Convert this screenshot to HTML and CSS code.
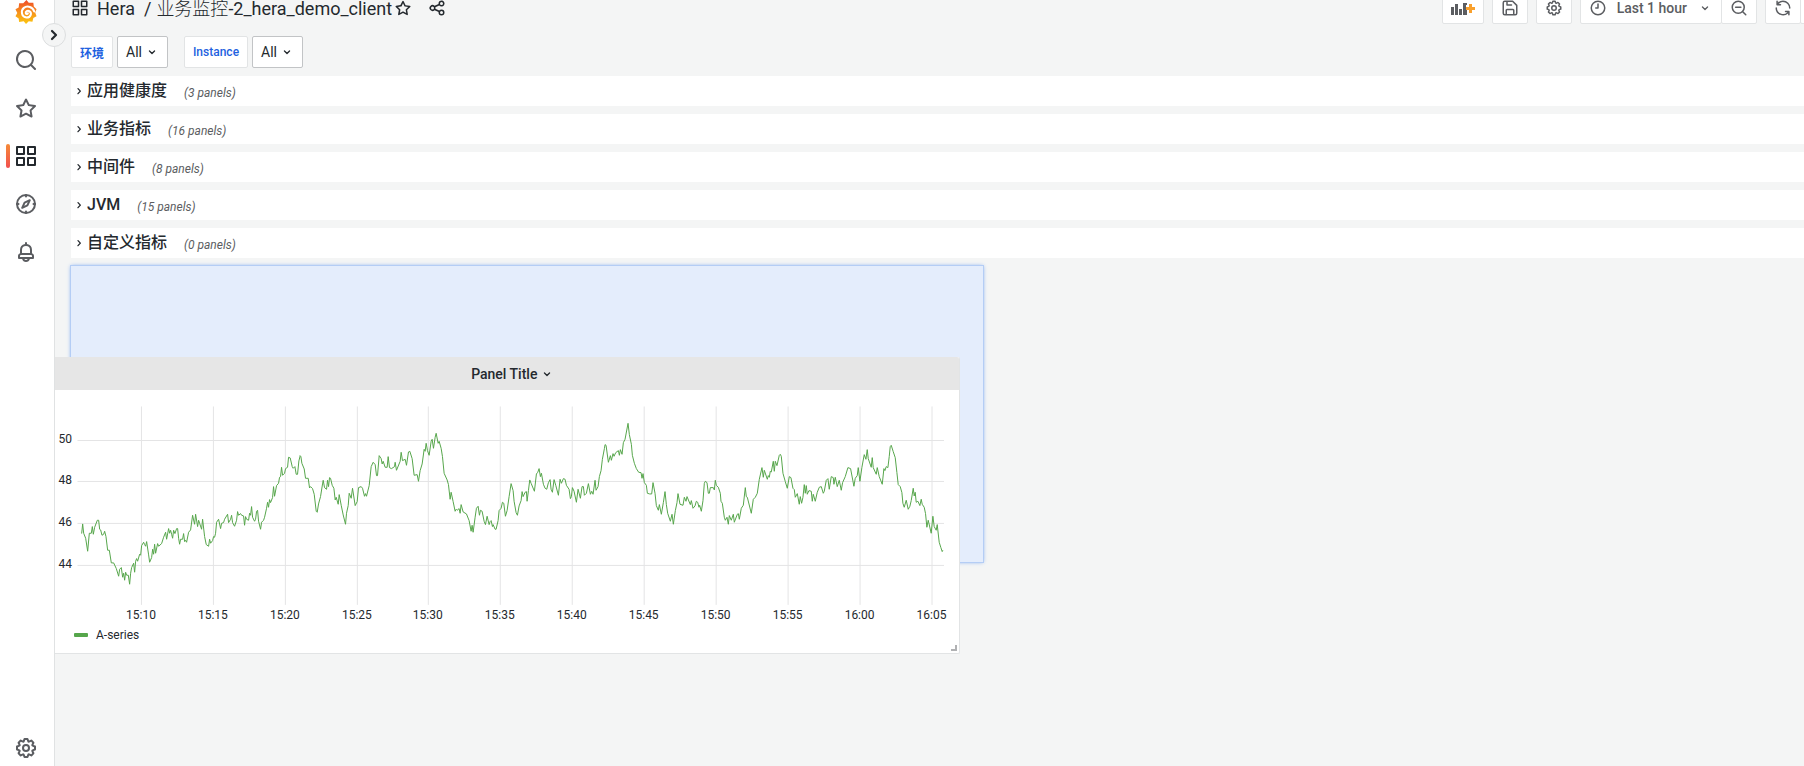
FILE: index.html
```html
<!DOCTYPE html>
<html lang="zh-CN">
<head>
<meta charset="utf-8">
<title>Hera / 业务监控-2_hera_demo_client</title>
<link rel="stylesheet" href="styles.css">
</head>
<body>
<svg class="sprite" aria-hidden="true">
  <symbol id="i-search" viewBox="0 0 24 24"><path d="M21.71,20.29,18,16.61A9,9,0,1,0,16.61,18l3.68,3.68a1,1,0,0,0,1.42,0A1,1,0,0,0,21.71,20.29ZM11,18a7,7,0,1,1,7-7A7,7,0,0,1,11,18Z"/></symbol>
  <symbol id="i-star" viewBox="0 0 24 24"><path d="M22,9.67A1,1,0,0,0,21.14,9l-5.69-.83L12.9,3a1,1,0,0,0-1.8,0L8.55,8.16,2.86,9a1,1,0,0,0-.81.68,1,1,0,0,0,.25,1l4.13,4-1,5.68A1,1,0,0,0,6.9,21.44L12,18.77l5.1,2.67a.93.93,0,0,0,.46.12,1,1,0,0,0,.59-.19,1,1,0,0,0,.4-1l-1-5.68,4.13-4A1,1,0,0,0,22,9.67Zm-6.15,4a1,1,0,0,0-.29.88l.72,4.2-3.76-2a1.06,1.06,0,0,0-.94,0l-3.76,2,.72-4.2a1,1,0,0,0-.29-.88l-3-3,4.21-.61a1,1,0,0,0,.76-.55L12,5.7l1.88,3.82a1,1,0,0,0,.76.55l4.21.61Z"/></symbol>
  <symbol id="i-apps" viewBox="0 0 24 24"><path d="M10,13H3a1,1,0,0,0-1,1v7a1,1,0,0,0,1,1h7a1,1,0,0,0,1-1V14A1,1,0,0,0,10,13ZM9,20H4V15H9ZM21,2H14a1,1,0,0,0-1,1v7a1,1,0,0,0,1,1h7a1,1,0,0,0,1-1V3A1,1,0,0,0,21,2ZM20,9H15V4h5Zm1,4H14a1,1,0,0,0-1,1v7a1,1,0,0,0,1,1h7a1,1,0,0,0,1-1V14A1,1,0,0,0,21,13Zm-1,7H15V15h5ZM10,2H3A1,1,0,0,0,2,3v7a1,1,0,0,0,1,1h7a1,1,0,0,0,1-1V3A1,1,0,0,0,10,2ZM9,9H4V4H9Z"/></symbol>
  <symbol id="i-cog" viewBox="0 0 24 24"><path d="M21.32,9.55l-1.89-.63.89-1.78A1,1,0,0,0,20.13,6L18,3.87a1,1,0,0,0-1.15-.19l-1.78.89-.63-1.89A1,1,0,0,0,13.5,2h-3a1,1,0,0,0-.95.68L8.92,4.57,7.14,3.68A1,1,0,0,0,6,3.87L3.87,6a1,1,0,0,0-.19,1.15l.89,1.78-1.89.63A1,1,0,0,0,2,10.5v3a1,1,0,0,0,.68.95l1.89.63-.89,1.78A1,1,0,0,0,3.87,18L6,20.13a1,1,0,0,0,1.15.19l1.78-.89.63,1.89a1,1,0,0,0,.95.68h3a1,1,0,0,0,.95-.68l.63-1.89,1.78.89A1,1,0,0,0,18,20.13L20.13,18a1,1,0,0,0,.19-1.15l-.89-1.78,1.89-.63A1,1,0,0,0,22,13.5v-3A1,1,0,0,0,21.32,9.55ZM20,12.78l-1.2.4A2,2,0,0,0,17.64,16l.57,1.14-1.1,1.1L16,17.64a2,2,0,0,0-2.79,1.16l-.4,1.2H11.22l-.4-1.2A2,2,0,0,0,8,17.64l-1.14.57-1.1-1.1L6.36,16A2,2,0,0,0,5.2,13.18L4,12.78V11.22l1.2-.4A2,2,0,0,0,6.36,8L5.79,6.89l1.1-1.1L8,6.36A2,2,0,0,0,10.82,5.2l.4-1.2h1.56l.4,1.2A2,2,0,0,0,16,6.36l1.14-.57,1.1,1.1L17.64,8a2,2,0,0,0,1.16,2.79l1.2.4ZM12,8a4,4,0,1,0,4,4A4,4,0,0,0,12,8Zm0,6a2,2,0,1,1,2-2A2,2,0,0,1,12,14Z"/></symbol>
  <symbol id="i-bell" viewBox="0 0 24 24"><path d="M18,13.18V10a6,6,0,0,0-5-5.91V3a1,1,0,0,0-2,0V4.09A6,6,0,0,0,6,10v3.18A3,3,0,0,0,4,16v2a1,1,0,0,0,1,1H8.14a4,4,0,0,0,7.72,0H19a1,1,0,0,0,1-1V16A3,3,0,0,0,18,13.18ZM8,10a4,4,0,0,1,8,0v3H8Zm4,10a2,2,0,0,1-1.72-1h3.44A2,2,0,0,1,12,20Zm6-3H6V16a1,1,0,0,1,1-1H17a1,1,0,0,1,1,1Z"/></symbol>
  <symbol id="i-compass" viewBox="0 0 24 24"><g fill="none" stroke="currentColor" stroke-width="2" stroke-linejoin="round" stroke-linecap="round"><circle cx="12" cy="12" r="9"/><path d="M15.800 8.200 13.400 13.400 8.200 15.800 10.600 10.600ZM12 3V4.500M12 19.500v1.500M3 12h1.500M19.500 12h1.500"/></g></symbol>
  <symbol id="i-share" viewBox="0 0 24 24"><path d="M18,14a4,4,0,0,0-3.08,1.48l-5.1-2.35a3.64,3.64,0,0,0,0-2.26l5.1-2.35A4,4,0,1,0,14,6a4.17,4.17,0,0,0,.07.71L8.79,9.14a4,4,0,1,0,0,5.72l5.28,2.43A4.17,4.17,0,0,0,14,18a4,4,0,1,0,4-4ZM18,4a2,2,0,1,1-2,2A2,2,0,0,1,18,4ZM6,14a2,2,0,1,1,2-2A2,2,0,0,1,6,14Zm12,6a2,2,0,1,1,2-2A2,2,0,0,1,18,20Z"/></symbol>
  <symbol id="i-save" viewBox="0 0 24 24"><g fill="none" stroke="currentColor" stroke-width="2" stroke-linejoin="round" stroke-linecap="round"><path d="M3 5a2 2 0 0 1 2-2h10.5L21 8.500V19a2 2 0 0 1-2 2H5a2 2 0 0 1-2-2ZM8 3v5h6M7 21v-6a1 1 0 0 1 1-1h8a1 1 0 0 1 1 1v6"/></g></symbol>
  <symbol id="i-clock" viewBox="0 0 24 24"><g fill="none" stroke="currentColor" stroke-width="2" stroke-linecap="round" stroke-linejoin="round"><circle cx="12" cy="12" r="9"/><path d="M12 6.500V12H9"/></g></symbol>
  <symbol id="i-zoomout" viewBox="0 0 24 24"><g fill="none" stroke="currentColor" stroke-width="2" stroke-linecap="round"><circle cx="11" cy="11" r="8"/><path d="M17 17 21 21M7.500 11h7"/></g></symbol>
  <symbol id="i-sync" viewBox="0 0 24 24"><path d="M19.91,15.51H15.38a1,1,0,0,0,0,2h2.4A8,8,0,0,1,4,12a1,1,0,0,0-2,0,10,10,0,0,0,16.88,7.23V21a1,1,0,0,0,2,0V16.5A1,1,0,0,0,19.91,15.51ZM12,2A10,10,0,0,0,5.12,4.77V3a1,1,0,0,0-2,0V7.5a1,1,0,0,0,1,1h4.5a1,1,0,0,0,0-2H6.22A8,8,0,0,1,20,12a1,1,0,0,0,2,0A10,10,0,0,0,12,2Z"/></symbol>
  <symbol id="i-down" viewBox="0 0 24 24"><path d="M8.200 10.500 12 14.200 15.800 10.500" fill="none" stroke="currentColor" stroke-width="2" stroke-linecap="round" stroke-linejoin="round"/></symbol>
  <symbol id="i-right" viewBox="0 0 24 24"><path d="M10.500 8.500 14 12.200 10.500 16" fill="none" stroke="currentColor" stroke-width="2" stroke-linecap="round" stroke-linejoin="round"/></symbol>
  <symbol id="i-expand" viewBox="0 0 24 24"><path d="M10 8 14 12 10 16" fill="none" stroke="currentColor" stroke-width="2.200" stroke-linecap="round" stroke-linejoin="round"/></symbol>
</svg>

<div class="app">
  <nav class="sidebar" aria-label="Main menu">
    <a class="side-link" href="#" aria-label="Grafana">
      <svg class="logo" viewBox="0 0 24 26" aria-hidden="true">
        <defs><linearGradient id="flame" x1="0" y1="1" x2="0" y2="0"><stop offset="0" stop-color="#fcc70f"/><stop offset=".55" stop-color="#f58a1f"/><stop offset="1" stop-color="#ef4a28"/></linearGradient></defs>
        <path fill="url(#flame)" d="M12.500 0 15 3 20 3 20.500 7 23.500 10 22 13.500 23.500 17.500 20 19.500 19 23.500 15 23 12 26 9.500 23 4.500 24 4 20 .5 17.500 2.500 14 .5 10 4 8 4.500 3.500 9 3.500Z"/>
        <path fill="none" stroke="#fff" stroke-width="2.200" stroke-linecap="round" d="M21 12.500C19.500 7.500 13.500 5.500 9.700 8.500 6 11.500 7 18.500 12.500 19 17 19.200 18.800 14.500 16 12.300 13.800 10.600 11 12.300 11.800 14.500 12.300 15.600 13.600 15.400 14 14.400"/>
      </svg>
    </a>
    <a class="side-link" href="#" aria-label="Search"><svg class="icon icon-lg"><use href="#i-search"/></svg></a>
    <a class="side-link" href="#" aria-label="Starred"><svg class="icon icon-lg"><use href="#i-star"/></svg></a>
    <a class="side-link active" href="#" aria-label="Dashboards"><svg class="icon icon-lg"><use href="#i-apps"/></svg></a>
    <a class="side-link" href="#" aria-label="Explore"><svg class="icon icon-lg"><use href="#i-compass"/></svg></a>
    <a class="side-link" href="#" aria-label="Alerting"><svg class="icon icon-lg"><use href="#i-bell"/></svg></a>
    <a class="side-link bottom" href="#" aria-label="Configuration"><svg class="icon icon-lg"><use href="#i-cog"/></svg></a>
    <button class="expand" type="button" aria-label="Expand menu"><svg class="icon icon-lg"><use href="#i-expand"/></svg></button>
  </nav>

  <main class="main">
    <header class="toolbar">
      <svg class="icon icon-md"><use href="#i-apps"/></svg>
      <h1 class="crumbs"><a href="#">Hera</a><span class="slash">/</span><a href="#"><span class="light">业务监控</span>-2_hera_demo_client</a></h1>
      <button class="plain" type="button" aria-label="Mark as favorite"><svg class="icon icon-md"><use href="#i-star"/></svg></button>
      <button class="plain" type="button" aria-label="Share"><svg class="icon icon-md"><use href="#i-share"/></svg></button>
      <div class="actions">
        <button class="tool" type="button" aria-label="Add panel">
          <svg class="add-icon" viewBox="0 0 24 16" aria-hidden="true"><path fill="#5b5d61" d="M0 7h3v8H0zM4 4h3v11H4zM8 9h3v6H8zM12 3h4v2h-1v4h1v6h-4z"/><path fill="#f9a02c" d="M18 4h3v3h3v3h-3v3h-3v-3h-3V7h3z"/></svg>
        </button>
        <button class="tool" type="button" aria-label="Save dashboard"><svg class="icon icon-md"><use href="#i-save"/></svg></button>
        <button class="tool" type="button" aria-label="Dashboard settings"><svg class="icon icon-md"><use href="#i-cog"/></svg></button>
        <div class="joined">
          <button class="tool time" type="button"><svg class="icon icon-md"><use href="#i-clock"/></svg><span>Last 1 hour</span><svg class="icon"><use href="#i-down"/></svg></button>
          <button class="tool" type="button" aria-label="Zoom out"><svg class="icon icon-md"><use href="#i-zoomout"/></svg></button>
        </div>
        <div class="joined">
          <button class="tool" type="button" aria-label="Refresh"><svg class="icon icon-md"><use href="#i-sync"/></svg></button>
          <button class="tool" type="button" aria-label="Refresh interval"><svg class="icon"><use href="#i-down"/></svg></button>
        </div>
      </div>
    </header>

    <div class="variables">
      <div class="variable">
        <label class="var-label strong" for="var-env">环境</label>
        <button class="var-value" id="var-env" type="button">All<svg class="icon"><use href="#i-down"/></svg></button>
      </div>
      <div class="variable">
        <label class="var-label" for="var-instance">Instance</label>
        <button class="var-value" id="var-instance" type="button">All<svg class="icon"><use href="#i-down"/></svg></button>
      </div>
    </div>

    <div class="rows">
      <button class="row" type="button"><svg class="icon"><use href="#i-right"/></svg><span class="row-title">应用健康度</span><span class="count">(3 panels)</span></button>
      <button class="row" type="button"><svg class="icon"><use href="#i-right"/></svg><span class="row-title">业务指标</span><span class="count">(16 panels)</span></button>
      <button class="row" type="button"><svg class="icon"><use href="#i-right"/></svg><span class="row-title">中间件</span><span class="count">(8 panels)</span></button>
      <button class="row" type="button"><svg class="icon"><use href="#i-right"/></svg><span class="row-title">JVM</span><span class="count">(15 panels)</span></button>
      <button class="row" type="button"><svg class="icon"><use href="#i-right"/></svg><span class="row-title">自定义指标</span><span class="count">(0 panels)</span></button>

      <div class="drop-slot">
        <section class="panel">
          <button class="panel-head" type="button"><span>Panel Title</span><svg class="icon"><use href="#i-down"/></svg></button>
          <svg class="chart" viewBox="48 390 911 235" role="img" aria-label="A-series">
            <g class="grid">
              <path d="M77.500 440.500H944.500M77.500 481.500H944.500M77.500 523.500H944.500M77.500 565.500H944.500"/>
              <path d="M141.500 406.500V605M213.500 406.500V605M285.500 406.500V605M357.500 406.500V605M428.500 406.500V605M500.500 406.500V605M572.500 406.500V605M644.500 406.500V605M716.500 406.500V605M788.500 406.500V605M860.500 406.500V605M932.500 406.500V605"/>
            </g>
            <g class="series">
              <polyline transform="translate(0 340) scale(.33333)" points="245,581 248,552 251,580 257,595 263,634 268,580 274,580 277,560 280,583 284,562 292,541 296,541 299,568 302,570 306,586 311,583 314,574 318,590 323,631 328,631 334,669 341,669 349,686 356,709 359,688 364,683 368,712 371,700 374,721 377,697 380,706 385,706 389,733 392,700 395,683 401,670 404,697 407,664 410,656 413,664 419,643 422,646 425,617 431,607 434,614 437,619 440,605 446,645 449,667 455,653 458,628 461,643 464,613 467,640 473,611 476,619 485,611 491,592 497,577 500,598 506,566 509,580 512,571 515,583 518,595 521,571 525,581 530,566 533,566 536,595 539,613 542,598 548,598 551,581 554,605 557,601 560,607 566,577 572,570 578,526 581,540 584,553 587,523 593,560 596,541 599,550 605,568 608,538 614,590 619,614 626,619 629,598 632,610 638,602 641,590 644,592 647,580 650,547 656,538 662,566 665,550 671,548 674,538 683,523 686,548 692,538 695,526 698,548 704,559 710,541 713,515 716,526 722,521 725,526 731,528 734,556 737,530 740,538 746,541 749,520 752,526 755,500 758,532 764,544 767,538 770,514 773,511 776,544 782,568 785,547 791,541 794,532 800,505 803,487 806,502 809,479 812,488 818,473 821,440 824,469 830,437 836,430 839,412 842,410 845,382 848,406 854,400 857,386 863,382 866,352 871,354 877,380 880,385 885,380 889,403 893,403 897,363 901,347"/>
              <polyline transform="translate(300 400) scale(.33333)" points="0,167 3,170 6,190 13,207 17,235 25,235 29,264 32,260 38,266 43,283 49,334 52,337 56,312 62,290 68,252 70,241 74,263 80,268 83,241 86,260 89,233 92,235 97,256 102,265 106,300 109,292 115,313 118,284 124,316 130,345 137,373 140,340 145,317 148,280 154,295 158,265 166,317 172,305 176,263 184,260 188,265 194,289 197,281 200,289 208,257 214,200 220,187 226,194 230,227 233,227 238,167 244,176 247,192 250,184 256,202 262,202 265,170 269,203 275,206 284,200 286,187 290,211 301,184 304,157 308,182 316,178 320,196 326,156 330,154 337,176 343,226 352,224 356,244 361,212 367,192 373,148 376,154 379,130 383,152 388,166 394,124 397,118 401,145 406,112 409,100 415,130 418,124 424,145 428,170 433,220 442,240 446,254 451,298 454,277 460,305 466,334 469,328 472,331 478,326 481,340 484,314 490,336 500,342 508,362 514,394 517,376 520,397 526,352 530,325 535,319 539,346 542,331 547,334 553,364 557,374 562,349 568,374 571,365 574,362 578,380 580,374 586,388 589,388 595,362 598,332 604,325 608,307 612,310 617,349 622,332 628,290 634,251 640,272 643,304 649,338 653,346 658,318 664,302 667,275 670,290 676,277 680,275 682,304 686,272 690,240 694,250 704,274 710,222 714,217 718,206 722,230 725,220 731,253 736,265 741,268 746,248 751,239 754,268 758,277 763,239 768,256 776,286 781,238 785,250 791,236 796,238 800,256 808,268 812,296 815,290 818,263 823,274 830,307 835,268 842,295 847,260 851,260 854,286 860,280 866,251 872,283 876,274 880,283 886,241 889,271 895,260 899,230 904,212 908,178 914,146 916,134 919,136 926,187 932,167 935,181 940,161 943,169 948,158 956,152 959,166 962,149 967,163 971,128 976,118 985,70 989,104 995,133 998,166 1004,190 1010,206 1017,217 1024,218 1027,235 1030,221 1034,248 1040,256 1043,280 1050,282"/>
              <polyline transform="translate(640 400) scale(.33333)" points="30,282 36,282 40,248 46,280 50,317 56,331 59,314 65,343 71,308 76,275 80,314 84,340 92,364 97,343 101,373 107,332 112,308 115,281 121,313 130,316 134,292 139,304 142,290 152,314 155,302 160,325 166,318 170,304 174,307 178,322 180,316 185,334 190,302 194,250 197,244 202,248 206,280 209,280 212,263 221,263 224,270 227,241 230,256 236,262 242,280 244,304 248,310 254,352 257,361 262,352 266,373 269,347 275,361 281,343 284,367 293,343 296,341 299,358 305,325 311,316 317,263 320,290 323,292 335,340 341,298 347,292 353,280 359,238 367,203 371,232 374,211 383,238 386,227 389,232 392,214 395,216 401,184 404,214 407,184 412,197 419,166 422,163 425,169 430,220 437,245 443,265 449,230 454,233 460,265 464,269 467,292 473,281 479,313 482,290 486,310 490,292 494,254 497,280 500,257 503,283 508,272 515,274 518,304 521,283 527,304 533,277 539,262 545,260 551,280 554,274 560,241 565,236 569,268 575,230 581,233 583,253 587,232 593,260 599,241 605,271 609,248 617,230 625,203 633,206 643,259 647,235 653,227 656,203 661,244 667,202 674,164 679,178 683,149 686,176 695,202 698,173 701,203 710,223 713,203 719,230 728,253 733,206 736,212 740,200 745,203 749,170 752,140 755,136 761,155 767,173 772,218 776,254 782,260 787,278 790,310 794,322 800,301 806,328 811,319 815,302 821,265 824,288 827,277 830,307 835,304 841,317 845,298 848,313 854,322 858,341 862,382 866,361 875,400 880,349 884,380 890,391 893,374 899,427 904,443 908,455 910,451"/>
            </g>
            <g class="axis-y">
              <text x="72" y="443">50</text><text x="72" y="484">48</text><text x="72" y="526">46</text><text x="72" y="568">44</text>
            </g>
            <g class="axis-x">
              <text x="141" y="619">15:10</text><text x="213" y="619">15:15</text><text x="285" y="619">15:20</text><text x="357" y="619">15:25</text><text x="428" y="619">15:30</text><text x="500" y="619">15:35</text><text x="572" y="619">15:40</text><text x="644" y="619">15:45</text><text x="716" y="619">15:50</text><text x="788" y="619">15:55</text><text x="860" y="619">16:00</text><text x="932" y="619">16:05</text>
            </g>
          </svg>
          <div class="legend"><span class="swatch"></span>A-series</div>
          <span class="resize"></span>
        </section>
      </div>
    </div>
  </main>
</div>
</body>
</html>
```

FILE: styles.css
```css
* {
  box-sizing: border-box;
}

body {
  margin: 0;
  overflow: hidden;
  background: #f4f5f5;
  color: #24292e;
  font-family: Roboto, "Noto Sans CJK SC", sans-serif;
  font-size: 14px;
}

button {
  padding: 0;
  border: 0;
  background: none;
  color: inherit;
  font: inherit;
}

a {
  color: inherit;
  text-decoration: none;
}

.sprite {
  display: none;
}

.icon {
  display: block;
  flex: none;
  width: 16px;
  height: 16px;
  fill: currentColor;
}

.icon-md {
  width: 18px;
  height: 18px;
}

.icon-lg {
  width: 24px;
  height: 24px;
}

.app {
  display: flex;
  height: 100vh;
}

/* Sidebar */

.sidebar {
  position: relative;
  z-index: 2;
  display: flex;
  flex: none;
  flex-direction: column;
  width: 55px;
  margin-top: -12px;
  border-right: 1px solid #e0e2e3;
  background: #fff;
  color: #5b5d61;
}

.side-link {
  position: relative;
  display: flex;
  align-items: center;
  justify-content: center;
  width: 52px;
  height: 48px;
  flex: none;
}

.side-link.active {
  color: #24292e;
}

.side-link.active::before {
  content: "";
  position: absolute;
  top: 12px;
  left: 6px;
  width: 4px;
  height: 24px;
  border-radius: 2px;
  background: linear-gradient(#f58a37, #f2504f);
}

.side-link.bottom {
  margin-top: auto;
  margin-bottom: -6px;
}

.logo {
  width: 22px;
  height: 24px;
}

.expand {
  position: absolute;
  top: 35px;
  right: -12px;
  display: flex;
  align-items: center;
  justify-content: center;
  width: 24px;
  height: 24px;
  border: 1px solid #dcdedf;
  border-radius: 50%;
  background: #f4f5f5;
  color: #24292e;
}

/* Toolbar */

.main {
  flex: 1;
  min-width: 0;
  margin-top: -8px;
  padding-left: 16px;
}

.toolbar {
  display: flex;
  align-items: center;
  height: 32px;
  margin-right: -32px;
}

.crumbs {
  padding-top: 1px;
  margin: 0 2px 0 8px;
  font-size: 18px;
  font-weight: 400;
  line-height: 24px;
  white-space: nowrap;
}

.light {
  font-weight: 300;
}

.slash {
  margin: 0 5px 0 9px;
}

.plain {
  margin-right: 16px;
}

.actions {
  display: flex;
  gap: 8px;
  margin-left: auto;
}

.joined {
  display: flex;
}

.joined .tool + .tool {
  margin-left: -1px;
}

.tool {
  display: flex;
  align-items: center;
  justify-content: center;
  min-width: 36px;
  height: 32px;
  padding: 0 8px;
  border: 1px solid #e2e4e5;
  border-radius: 2px;
  background: #fff;
  color: #5b5d61;
  font-weight: 500;
}

.time {
  gap: 10px;
}

.add-icon {
  width: 24px;
  height: 16px;
}

/* Template variables */

.variables {
  display: flex;
  gap: 16px;
  margin: 12px 0 8px;
}

.variable {
  display: flex;
  gap: 4px;
}

.var-label,
.var-value {
  display: flex;
  align-items: center;
  height: 32px;
  border: 1px solid #e2e4e5;
  border-radius: 2px;
  background: #fff;
}

.var-label {
  padding: 0 8px;
  color: #1f62e0;
  font-size: 12px;
  font-weight: 500;
}

.var-label.strong {
  font-weight: 700;
}

.var-value {
  gap: 2px;
  padding: 0 7px 0 8px;
  border-color: #c2c4c6;
}

/* Dashboard rows */

.rows {
  display: flex;
  flex-direction: column;
  gap: 8px;
}

.row {
  display: flex;
  align-items: center;
  height: 30px;
  background: #fff;
  text-align: left;
}

.row-title {
  font-size: 16px;
  font-weight: 500;
  line-height: 24px;
}

.count {
  padding-top: 3px;
  margin-left: 17px;
  color: #5b5d61;
  font-size: 12px;
  font-style: italic;
}

/* Panel being dragged over its drop slot */

.drop-slot {
  position: relative;
  width: 52.6%;
  height: 296px;
  background: #e4edfc;
  box-shadow: 0 0 0 1px #b4cdf5, 0 0 4px #6e9fef;
}

.panel {
  position: absolute;
  top: 91px;
  left: -24px;
  width: calc(100% + 1px);
  border: 1px solid #e2e4e5;
  border-top: 0;
  border-radius: 2px;
  background: #fff;
}

.panel-head {
  display: flex;
  align-items: center;
  justify-content: center;
  gap: 2px;
  width: 100%;
  height: 33px;
  padding-left: 20px;
  border-radius: 2px 2px 0 0;
  background: #e6e6e6;
  font-weight: 500;
}

.chart {
  display: block;
  width: 100%;
  height: auto;
  font-size: 12px;
  fill: #24292e;
}

.grid path {
  fill: none;
  stroke: #e4e4e5;
  stroke-width: 1;
}

.series polyline {
  fill: none;
  stroke: #56a64b;
  stroke-width: 3;
  stroke-linejoin: round;
}

.axis-x {
  text-anchor: middle;
}

.axis-y {
  text-anchor: end;
}

.legend {
  display: flex;
  align-items: center;
  gap: 8px;
  height: 28px;
  padding: 0 0 8px 26px;
  font-size: 12px;
}

.swatch {
  width: 14px;
  height: 4px;
  border-radius: 1px;
  background: #56a64b;
}

.resize {
  position: absolute;
  right: 2px;
  bottom: 2px;
  width: 6px;
  height: 6px;
  border: solid #b0b1b3;
  border-width: 0 2px 2px 0;
}
```
